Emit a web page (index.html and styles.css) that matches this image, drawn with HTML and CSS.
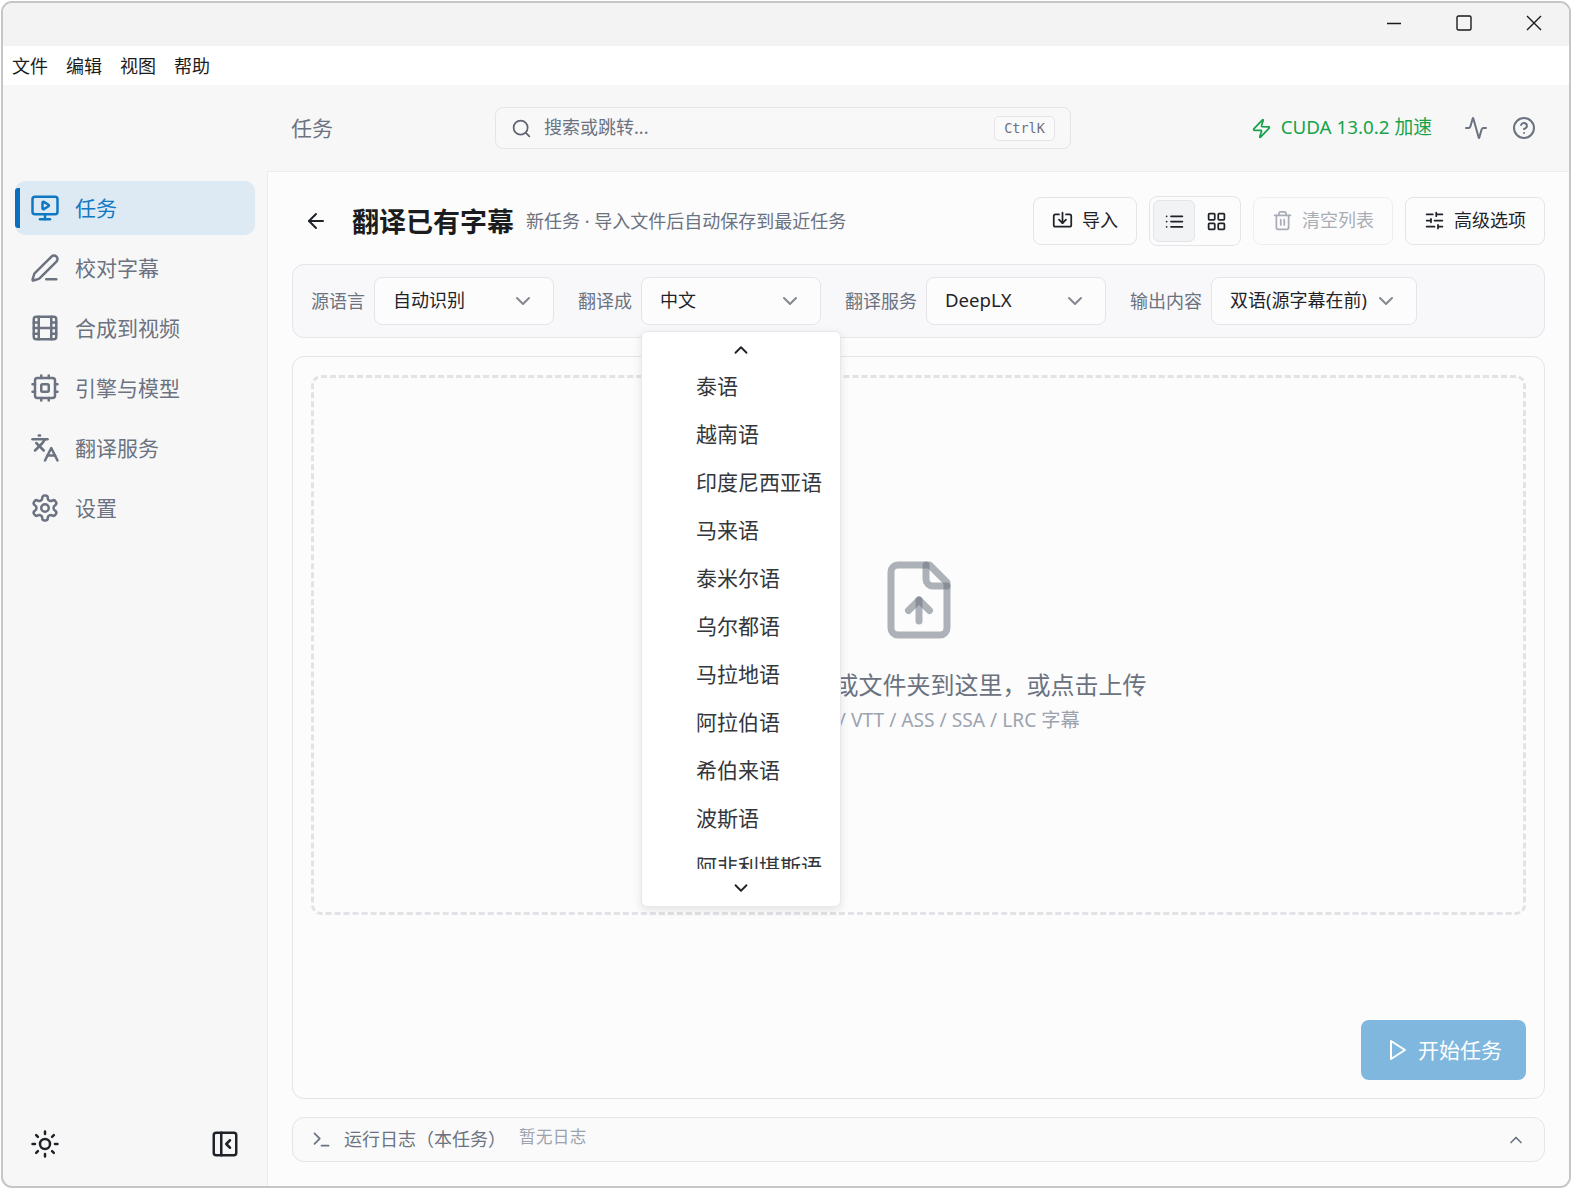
FILE: index.html
```html
<!DOCTYPE html>
<html lang="zh-CN">
<head>
  <meta charset="UTF-8">
  <title>翻译已有字幕</title>
  <link rel="stylesheet" href="styles.css">
</head>
<body>
<svg class="sprite" width="0" height="0">
  <defs>
    <symbol id="i-monitor" viewBox="0 0 24 24"><path d="M10 7.75a.75.75 0 0 1 1.142-.638l3.664 2.249a.75.75 0 0 1 0 1.278l-3.664 2.25a.75.75 0 0 1-1.142-.64z"/><path d="M12 17v4"/><path d="M8 21h8"/><rect x="2" y="3" width="20" height="14" rx="2"/></symbol>
    <symbol id="i-pen" viewBox="0 0 24 24"><path d="M13 21h8"/><path d="M21.174 6.812a1 1 0 0 0-3.986-3.987L3.842 16.174a2 2 0 0 0-.5.83l-1.321 4.352a.5.5 0 0 0 .623.622l4.353-1.32a2 2 0 0 0 .83-.497z"/></symbol>
    <symbol id="i-film" viewBox="0 0 24 24"><rect x="3" y="3" width="18" height="18" rx="2"/><path d="M7 3v18M3 7.5h4M3 12h18M3 16.5h4M17 3v18M17 7.5h4M17 16.5h4"/></symbol>
    <symbol id="i-cpu" viewBox="0 0 24 24"><rect x="4" y="4" width="16" height="16" rx="2"/><rect x="9" y="9" width="6" height="6" rx="1"/><path d="M15 2v2M15 20v2M2 15h2M2 9h2M20 15h2M20 9h2M9 2v2M9 20v2"/></symbol>
    <symbol id="i-lang" viewBox="0 0 24 24"><path d="m5 8 6 6"/><path d="m4 14 6-6 2-3"/><path d="M2 5h12"/><path d="M7 2h1"/><path d="m22 22-5-10-5 10"/><path d="M14 18h6"/></symbol>
    <symbol id="i-gear" viewBox="0 0 24 24"><path d="M12.22 2h-.44a2 2 0 0 0-2 2v.18a2 2 0 0 1-1 1.73l-.43.25a2 2 0 0 1-2 0l-.15-.08a2 2 0 0 0-2.73.73l-.22.38a2 2 0 0 0 .73 2.73l.15.1a2 2 0 0 1 1 1.72v.51a2 2 0 0 1-1 1.74l-.15.09a2 2 0 0 0-.73 2.73l.22.38a2 2 0 0 0 2.73.73l.15-.08a2 2 0 0 1 2 0l.43.25a2 2 0 0 1 1 1.73V20a2 2 0 0 0 2 2h.44a2 2 0 0 0 2-2v-.18a2 2 0 0 1 1-1.73l.43-.25a2 2 0 0 1 2 0l.15.08a2 2 0 0 0 2.73-.73l.22-.39a2 2 0 0 0-.73-2.73l-.15-.08a2 2 0 0 1-1-1.74v-.5a2 2 0 0 1 1-1.74l.15-.09a2 2 0 0 0 .73-2.73l-.22-.38a2 2 0 0 0-2.73-.73l-.15.08a2 2 0 0 1-2 0l-.43-.25a2 2 0 0 1-1-1.73V4a2 2 0 0 0-2-2z"/><circle cx="12" cy="12" r="3"/></symbol>
    <symbol id="i-down" viewBox="0 0 24 24"><path d="m6 9 6 6 6-6"/></symbol>
    <symbol id="i-up" viewBox="0 0 24 24"><path d="m18 15-6-6-6 6"/></symbol>
  </defs>
</svg>

<div class="window">
  <div class="titlebar">
    <svg class="win-btn" viewBox="0 0 16 16"><path d="M1 8.5h14"/></svg>
    <svg class="win-btn" viewBox="0 0 16 16"><rect x="1" y="1" width="14" height="14" rx="1.5"/></svg>
    <svg class="win-btn" viewBox="0 0 16 16"><path d="M1 1l14 14M15 1 1 15"/></svg>
  </div>
  <div class="menubar">
    <span class="up1">文件</span><span class="up1">编辑</span><span class="up1">视图</span><span class="up1">帮助</span>
  </div>

  <div class="app">
    <aside class="sidebar">
      <nav class="nav">
        <a class="nav-item active"><svg class="icon nav-icon"><use href="#i-monitor"/></svg><span class="up1">任务</span></a>
        <a class="nav-item"><svg class="icon nav-icon"><use href="#i-pen"/></svg><span class="up1">校对字幕</span></a>
        <a class="nav-item"><svg class="icon nav-icon"><use href="#i-film"/></svg><span class="up1">合成到视频</span></a>
        <a class="nav-item"><svg class="icon nav-icon"><use href="#i-cpu"/></svg><span class="up1">引擎与模型</span></a>
        <a class="nav-item"><svg class="icon nav-icon"><use href="#i-lang"/></svg><span class="up1">翻译服务</span></a>
        <a class="nav-item"><svg class="icon nav-icon"><use href="#i-gear"/></svg><span class="up1">设置</span></a>
      </nav>
      <div class="sidebar-foot">
        <svg class="icon foot-icon" viewBox="0 0 24 24"><circle cx="12" cy="12" r="4"/><path d="M12 2v2M12 20v2M4.93 4.93l1.41 1.41M17.66 17.66l1.41 1.41M2 12h2M20 12h2M6.34 17.66l-1.41 1.41M19.07 4.93l-1.41 1.41"/></svg>
        <svg class="icon foot-icon" viewBox="0 0 24 24"><rect x="3" y="3" width="18" height="18" rx="2"/><path d="M9 3v18"/><path d="m16 15-3-3 3-3"/></svg>
      </div>
    </aside>

    <div class="content">
      <header class="topbar">
        <div class="page-name up1">任务</div>
        <div class="search">
          <svg class="icon search-icon" viewBox="0 0 24 24"><circle cx="11" cy="11" r="8"/><path d="m21 21-4.3-4.3"/></svg>
          <span class="search-text up2">搜索或跳转...</span>
          <kbd class="kbd">CtrlK</kbd>
        </div>
        <div class="gpu">
          <svg class="icon gpu-icon" viewBox="0 0 24 24"><path d="M4 14a1 1 0 0 1-.78-1.63l9.9-10.2a.5.5 0 0 1 .86.46l-1.92 6.02A1 1 0 0 0 13 10h7a1 1 0 0 1 .78 1.63l-9.9 10.2a.5.5 0 0 1-.86-.46l1.92-6.02A1 1 0 0 0 11 14z"/></svg>
          <span class="up2">CUDA 13.0.2 加速</span>
        </div>
        <svg class="icon top-icon" viewBox="0 0 24 24"><path d="M22 12h-2.48a2 2 0 0 0-1.93 1.46l-2.35 8.36a.25.25 0 0 1-.48 0L9.24 2.18a.25.25 0 0 0-.48 0l-2.35 8.36A2 2 0 0 1 4.49 12H2"/></svg>
        <svg class="icon top-icon" viewBox="0 0 24 24"><circle cx="12" cy="12" r="10"/><path d="M9.09 9a3 3 0 0 1 5.83 1c0 2-3 3-3 3"/><path d="M12 17h.01"/></svg>
      </header>

      <main class="main">
        <div class="heading">
          <svg class="icon back" viewBox="0 0 24 24"><path d="m12 19-7-7 7-7"/><path d="M19 12H5"/></svg>
          <h1 class="title">翻译已有字幕</h1>
          <span class="subtitle up1">新任务 · 导入文件后自动保存到最近任务</span>
          <div class="actions">
            <button class="btn btn-import">
              <svg class="icon btn-icon" viewBox="0 0 24 24"><path d="M12 3v12"/><path d="m8 11 4 4 4-4"/><path d="M8 5H4a2 2 0 0 0-2 2v10a2 2 0 0 0 2 2h16a2 2 0 0 0 2-2V7a2 2 0 0 0-2-2h-4"/></svg>
              <span class="up1">导入</span>
            </button>
            <div class="toggle">
              <span class="toggle-item on"><svg class="icon btn-icon" viewBox="0 0 24 24"><path d="M3 12h.01M3 18h.01M3 6h.01M8 12h13M8 18h13M8 6h13"/></svg></span>
              <span class="toggle-item"><svg class="icon btn-icon" viewBox="0 0 24 24"><rect x="3" y="3" width="7" height="7" rx="1"/><rect x="14" y="3" width="7" height="7" rx="1"/><rect x="14" y="14" width="7" height="7" rx="1"/><rect x="3" y="14" width="7" height="7" rx="1"/></svg></span>
            </div>
            <button class="btn btn-clear">
              <svg class="icon btn-icon" viewBox="0 0 24 24"><path d="M3 6h18"/><path d="M19 6v14c0 1-1 2-2 2H7c-1 0-2-1-2-2V6"/><path d="M8 6V4c0-1 1-2 2-2h4c1 0 2 1 2 2v2"/><path d="M10 11v6M14 11v6"/></svg>
              <span class="up1">清空列表</span>
            </button>
            <button class="btn btn-adv">
              <svg class="icon btn-icon" viewBox="0 0 24 24"><path d="M10 5H3M12 19H3M14 3v4M16 17v4M21 12h-9M21 19h-5M21 5h-7M8 10v4M8 12H3"/></svg>
              <span class="up1">高级选项</span>
            </button>
          </div>
        </div>

        <div class="options">
          <div class="field">
            <label class="field-label up1">源语言</label>
            <div class="select"><span class="up2">自动识别</span><svg class="icon chevron"><use href="#i-down"/></svg></div>
          </div>
          <div class="field">
            <label class="field-label up1">翻译成</label>
            <div class="select open">
              <span class="up2">中文</span><svg class="icon chevron"><use href="#i-down"/></svg>
              <div class="dropdown">
                <div class="scroll-btn scroll-up"><svg class="icon scroll-icon"><use href="#i-up"/></svg></div>
                <ul class="dropdown-list">
                  <li>泰语</li>
                  <li>越南语</li>
                  <li>印度尼西亚语</li>
                  <li>马来语</li>
                  <li>泰米尔语</li>
                  <li>乌尔都语</li>
                  <li>马拉地语</li>
                  <li>阿拉伯语</li>
                  <li>希伯来语</li>
                  <li>波斯语</li>
                  <li>阿非利堪斯语</li>
                </ul>
                <div class="scroll-btn scroll-down"><svg class="icon scroll-icon"><use href="#i-down"/></svg></div>
              </div>
            </div>
          </div>
          <div class="field">
            <label class="field-label up1">翻译服务</label>
            <div class="select"><span class="up2 latin">DeepLX</span><svg class="icon chevron"><use href="#i-down"/></svg></div>
          </div>
          <div class="field">
            <label class="field-label up1">输出内容</label>
            <div class="select select-auto"><span class="up2">双语(源字幕在前)</span><svg class="icon chevron"><use href="#i-down"/></svg></div>
          </div>
        </div>

        <section class="panel">
          <div class="dropzone">
            <svg class="icon upload-icon" viewBox="0 0 24 24"><path d="M15 2H6a2 2 0 0 0-2 2v16a2 2 0 0 0 2 2h12a2 2 0 0 0 2-2V7Z"/><path d="M14 2v4a2 2 0 0 0 2 2h4"/><path d="M12 12v6"/><path d="m15 15-3-3-3 3"/></svg>
            <div class="drop-title">拖拽字幕文件或文件夹到这里，或点击上传</div>
            <div class="drop-hint">支持 SRT / VTT / ASS / SSA / LRC 字幕</div>
          </div>
          <div class="panel-foot">
            <button class="start">
              <svg class="icon start-icon" viewBox="0 0 24 24"><path d="M6 3l14 9-14 9z"/></svg>
              <span class="up1">开始任务</span>
            </button>
          </div>
        </section>

        <div class="logbar">
          <svg class="icon log-icon" viewBox="0 0 24 24"><path d="M12 19h8"/><path d="m4 17 6-6-6-6"/></svg>
          <span class="log-title up2">运行日志（本任务）</span>
          <span class="log-empty">暂无日志</span>
          <svg class="icon log-chevron"><use href="#i-up"/></svg>
        </div>
      </main>
    </div>
  </div>
</div>
</body>
</html>
```

FILE: styles.css
```css
* {
  box-sizing: border-box;
}

html, body {
  margin: 0;
  background: #fff;
}

body {
  font-family: "Noto Sans", "Noto Sans CJK SC", sans-serif;
  font-size: 18px;
  color: #1f2328;
}

.sprite {
  position: absolute;
}

.icon {
  display: block;
  flex: none;
  fill: none;
  stroke: currentColor;
  stroke-width: 2;
  stroke-linecap: round;
  stroke-linejoin: round;
}

/* text sits a little low in centered rows, these pull it back up */
.up1 {
  margin-bottom: 2px;
}

.up2 {
  margin-bottom: 4px;
}

.window {
  margin: 1px;
  width: 1570px;
  height: 1187px;
  border: 2px solid #c6c6c6;
  border-radius: 11px;
  overflow: hidden;
  display: flex;
  flex-direction: column;
  background: #f7f7f8;
}

.titlebar {
  height: 43px;
  background: #f3f3f3;
  display: flex;
  justify-content: flex-end;
  align-items: center;
  gap: 54px;
  padding: 0 27px 3px 0;
  color: #1a1a1a;
}

.win-btn {
  width: 16px;
  height: 16px;
  fill: none;
  stroke: currentColor;
  stroke-width: 1.4;
}

.menubar {
  height: 39px;
  background: #fff;
  display: flex;
  align-items: center;
  gap: 18px;
  padding-left: 9px;
  color: #1c1c1c;
}

.app {
  flex: 1;
  display: flex;
  min-height: 0;
}

/* sidebar */
.sidebar {
  width: 264px;
  flex: none;
  display: flex;
  flex-direction: column;
  padding: 96px 12px 27px;
}

.nav {
  display: flex;
  flex-direction: column;
  gap: 6px;
  width: 240px;
}

.nav-item {
  height: 54px;
  display: flex;
  align-items: center;
  gap: 15px;
  padding-left: 15px;
  font-size: 21px;
  color: #6b7280;
  border-radius: 10px;
}

.nav-item.active {
  background: #deeaf3;
  color: #0f78c2;
  position: relative;
}

.nav-item.active::before {
  content: "";
  position: absolute;
  left: 0;
  top: 7px;
  bottom: 7px;
  width: 5px;
  border-radius: 3px 0 0 3px;
  background: #0b6fbd;
}

.nav-icon {
  width: 30px;
  height: 30px;
}

.sidebar-foot {
  margin-top: auto;
  display: flex;
  justify-content: space-between;
  padding: 0 15px;
  color: #1f2328;
}

.foot-icon {
  width: 30px;
  height: 30px;
}

/* right side */
.content {
  flex: 1;
  min-width: 0;
  display: flex;
  flex-direction: column;
}

.topbar {
  height: 86px;
  flex: none;
  display: flex;
  align-items: center;
  padding: 0 33px 0 24px;
}

.page-name {
  width: 204px;
  font-size: 21px;
  color: #6b7280;
}

.search {
  width: 576px;
  height: 42px;
  display: flex;
  align-items: center;
  padding: 0 15px;
  background: #f8f8f9;
  border: 1px solid #e4e4e9;
  border-radius: 8px;
  color: #6b7280;
}

.search-icon {
  width: 21px;
  height: 21px;
  color: #5f6672;
}

.search-text {
  margin-left: 12px;
}

.kbd {
  margin-left: auto;
  height: 25px;
  width: 61px;
  display: flex;
  align-items: center;
  justify-content: center;
  border: 1px solid #e4e4e9;
  border-radius: 5px;
  background: #fafafb;
  font-family: "DejaVu Sans Mono", monospace;
  font-size: 13.5px;
  color: #6b7280;
}

.gpu {
  margin-left: auto;
  display: flex;
  align-items: center;
  gap: 9px;
  font-size: 18.8px;
  color: #16a34a;
}

.gpu-icon {
  width: 21px;
  height: 21px;
}

.top-icon {
  width: 24px;
  height: 24px;
  margin-left: 24px;
  color: #6b7280;
}

.gpu + .top-icon {
  margin-left: 32px;
}

.main {
  flex: 1;
  min-height: 0;
  display: flex;
  flex-direction: column;
  gap: 18px;
  padding: 24px 24px 24px;
  background: #fcfcfd;
  border-top: 1px solid #ececf0;
  border-left: 1px solid #ececf0;
}

.heading {
  height: 50px;
  flex: none;
  display: flex;
  align-items: center;
}

.back {
  width: 24px;
  height: 24px;
  margin: 0 0 0 12px;
  color: #1f2328;
}

.title {
  margin: 0 0 2px 24px;
  font-size: 27px;
  font-weight: 700;
  color: #1a1c20;
}

.subtitle {
  margin-left: 12px;
  color: #6b7280;
}

.actions {
  margin-left: auto;
  display: flex;
  align-items: center;
  gap: 12px;
}

.btn {
  height: 48px;
  display: flex;
  align-items: center;
  justify-content: center;
  gap: 9px;
  padding: 0 0 2px;
  font: inherit;
  color: #1f2328;
  background: #fcfcfd;
  border: 1px solid #e4e4e9;
  border-radius: 8px;
}

.btn-icon {
  width: 21px;
  height: 21px;
}

.btn-import {
  width: 104px;
}

.btn-clear {
  width: 140px;
  color: #a9adb5;
  border-color: #eeeef1;
}

.btn-adv {
  width: 140px;
}

.toggle {
  width: 92px;
  height: 50px;
  display: flex;
  align-items: center;
  gap: 0;
  padding: 0 3px;
  border: 1px solid #e4e4e9;
  border-radius: 8px;
}

.toggle-item {
  width: 42px;
  height: 42px;
  display: flex;
  align-items: center;
  justify-content: center;
  border-radius: 6px;
}

.toggle-item.on {
  background: #f2f3f5;
  border: 1px solid #e4e4e9;
}

/* options row */
.options {
  height: 74px;
  flex: none;
  display: flex;
  align-items: center;
  gap: 24px;
  padding: 0 18px;
  background: #f8f8fa;
  border: 1px solid #e4e4e9;
  border-radius: 12px;
}

.field {
  display: flex;
  align-items: center;
  gap: 9px;
}

.field-label {
  color: #6b7280;
}

.select {
  position: relative;
  width: 180px;
  height: 48px;
  display: flex;
  align-items: center;
  justify-content: space-between;
  padding: 0 18px 0 18px;
  background: #fcfcfd;
  border: 1px solid #e4e4e9;
  border-radius: 8px;
}

.latin {
  font-size: 18.6px;
}

.select-auto {
  width: 206px;
  padding-right: 18px;
}

.chevron {
  width: 24px;
  height: 24px;
  color: #85888f;
}

.dropdown {
  position: absolute;
  z-index: 5;
  top: 53px;
  left: -1px;
  width: 200px;
  height: 576px;
  display: flex;
  flex-direction: column;
  background: #fff;
  border: 1px solid #e8e8ec;
  border-radius: 6px;
  box-shadow: 0 3px 10px rgba(0, 0, 0, 0.1);
}

.scroll-btn {
  flex: none;
  display: flex;
  justify-content: center;
  color: #1f2328;
}

.scroll-up {
  height: 30px;
  align-items: flex-end;
  padding-bottom: 1px;
}

.scroll-down {
  height: 37px;
  align-items: center;
}

.scroll-icon {
  width: 22px;
  height: 22px;
}

.dropdown-list {
  flex: 1;
  min-height: 0;
  overflow: hidden;
  list-style: none;
  margin: 0;
  padding: 0;
}

.dropdown-list li {
  height: 48px;
  line-height: 48px;
  padding-left: 54px;
  font-size: 21px;
  color: #33363b;
  white-space: nowrap;
}

/* upload panel */
.panel {
  flex: 1;
  min-height: 0;
  display: flex;
  flex-direction: column;
  padding: 18px 18px 18px;
  background: #fcfcfd;
  border: 1px solid #e4e4e9;
  border-radius: 12px;
}

.dropzone {
  height: 540px;
  flex: none;
  display: flex;
  flex-direction: column;
  align-items: center;
  justify-content: center;
  border: 3px dashed #e3e3e7;
  border-radius: 10px;
}

.upload-icon {
  width: 84px;
  height: 84px;
  color: #6b7280;
  stroke-opacity: 0.55;
}

.drop-title {
  margin-top: 24px;
  font-size: 24px;
  color: #6b7280;
}

.drop-hint {
  margin-top: 4px;
  font-size: 19.2px;
  color: #9ca3af;
}

.panel-foot {
  margin-top: auto;
  display: flex;
  justify-content: flex-end;
}

.start {
  width: 165px;
  height: 60px;
  display: flex;
  align-items: center;
  justify-content: center;
  gap: 9px;
  font: inherit;
  font-size: 21px;
  color: #fff;
  background: #7fb7de;
  border: none;
  border-radius: 8px;
}

.start-icon {
  width: 24px;
  height: 24px;
}

.logbar {
  height: 45px;
  flex: none;
  display: flex;
  align-items: center;
  padding: 0 18px 0 18px;
  background: #fafafb;
  border: 1px solid #e4e4e9;
  border-radius: 12px;
}

.log-icon {
  width: 21px;
  height: 21px;
  color: #6b7280;
}

.log-title {
  margin-left: 12px;
  color: #6b7280;
}

.log-empty {
  margin-left: 13px;
  margin-bottom: 8px;
  font-size: 16.5px;
  letter-spacing: 0.4px;
  color: #9ca3af;
}

.log-chevron {
  margin-left: auto;
  width: 20px;
  height: 20px;
  color: #6b7280;
}
```
